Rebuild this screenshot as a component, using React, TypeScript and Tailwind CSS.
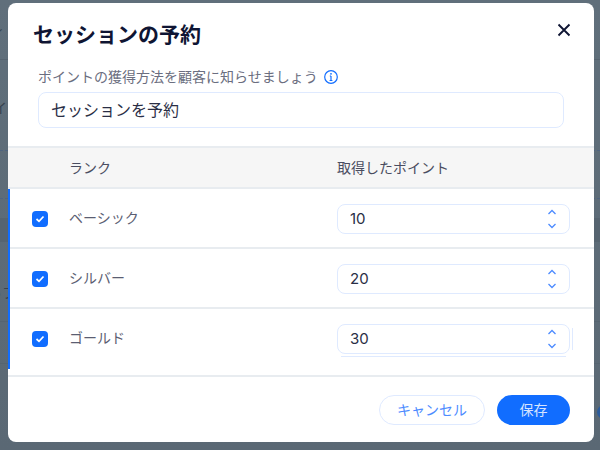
import { FC } from 'react'

const font = { fontFamily: '"Inter", "Noto Sans CJK JP", sans-serif' }

const Stepper: FC<{ value: string }> = ({ value }) => (
  <div className="flex h-[30px] w-[233px] items-center justify-between rounded-lg border border-[#dfeaff] bg-white pl-[12px] pr-[12px] text-[15px] text-[#2a2e45]">
    <span>{value}</span>
    <div className="flex flex-col gap-[6px] text-[#4d8bff]">
      <svg width="10" height="7" viewBox="0 0 10 7" fill="none" stroke="currentColor" strokeWidth="1.3">
        <path d="M1.5 5 5 1.5 8.5 5" />
      </svg>
      <svg width="10" height="7" viewBox="0 0 10 7" fill="none" stroke="currentColor" strokeWidth="1.3">
        <path d="M1.5 2 5 5.5 8.5 2" />
      </svg>
    </div>
  </div>
)

const Row: FC<{ name: string; value: string; last?: boolean }> = ({ name, value, last }) => (
  <div className={`flex h-[60px] items-start pl-[22px] ${last ? '' : 'border-b-2 border-[#e8ecf0]'}`}>
    <div className="mt-[22px] flex h-4 w-4 items-center justify-center rounded-[4px] bg-[#116dff]">
      <svg width="10" height="8" viewBox="0 0 10 8" fill="none" stroke="white" strokeWidth="1.7">
        <path d="M1.5 4 4 6.3 8.5 1.5" />
      </svg>
    </div>
    <div className="ml-[21px] mt-[19px] w-[268px] text-sm leading-5 text-[#5b5e72]">{name}</div>
    <div className="relative mt-[15px]">
      <Stepper value={value} />
      {last && (
        <>
          <span className="absolute -right-[3px] top-[4px] h-[22px] w-px bg-[#dfeaff]" />
          <span className="absolute left-[4px] top-[32px] h-px w-[225px] bg-[#dfeaff]" />
        </>
      )}
    </div>
  </div>
)

// the page behind the dialog, only its edges show
const Backdrop = () => (
  <div className="absolute inset-0 flex flex-col bg-gradient-to-b from-[#606f7b] to-[#5a6874] text-sm text-[#37434f]">
    <div className="h-[60px] border-b border-[#566470]" />
    <div className="h-[91px] border-b border-dashed border-[#4f6480]" />
    <div className="h-[48px] border-b border-dashed border-[#4f6480]" />
    <div className="mt-[19px] h-[24px] bg-[#566470]" />
    <div className="mt-[79px] h-px bg-[#566470]" />
    <div className="mt-[41px] h-px bg-[#566470]" />
    <span className="absolute left-[-7px] top-[98px]">イ</span>
    <span className="absolute left-[-12px] top-[283px]">っフ</span>
    <span className="absolute left-[-9px] top-[22px]">ィ</span>
    <span className="absolute left-[597px] top-[405px] h-[14px] w-[14px] rounded-full bg-[#2c5c9c]" />
  </div>
)

export default function App() {
  return (
    <div className="relative h-[450px] w-[600px] overflow-hidden pl-[8px] pt-[3px]" style={font}>
      <Backdrop />
      <div className="relative flex h-[439px] w-[586px] flex-col overflow-hidden rounded-lg bg-white">
        <div className="flex items-start justify-between pl-[25px] pr-[22px] pt-[17px]">
          <h1 className="text-[21px] font-bold leading-[30px] text-[#0f1533]">セッションの予約</h1>
          <svg className="mt-[2px]" width="16" height="16" viewBox="0 0 16 16" fill="none" stroke="#0f1533" strokeWidth="1.9">
            <path d="M2.5 2.5 13.5 13.5M13.5 2.5 2.5 13.5" />
          </svg>
        </div>
        <div className="mt-[17px] flex items-center gap-[6px] pl-[30px] text-sm leading-5 text-[#6b6e80]">
          ポイントの獲得方法を顧客に知らせましょう
          <svg width="14" height="14" viewBox="0 0 14 14" fill="none" stroke="#116dff" strokeWidth="1.2">
            <circle cx="7" cy="7" r="6.3" />
            <path d="M7 6v4.5M5.6 10.5h2.8M5.8 6H7" />
            <circle cx="7" cy="3.8" r=".9" fill="#116dff" stroke="none" />
          </svg>
        </div>
        <div className="ml-[30px] mt-[5px] flex h-[36px] w-[526px] items-center rounded-lg border border-[#dfeaff] pl-[12px] text-base text-[#2a2e45]">
          セッションを予約
        </div>
        <div className="mt-[18px] flex h-[43px] items-center border-y-2 border-[#e8ecf0] bg-[#f6f6f6] pl-[61px] text-sm text-[#4a4d60]">
          <span className="w-[268px]">ランク</span>
          <span>取得したポイント</span>
        </div>
        <div className="border-l-2 border-[#116dff]">
          <Row name="ベーシック" value="10" />
          <Row name="シルバー" value="20" />
          <Row name="ゴールド" value="30" last />
        </div>
        <div className="h-[8px] border-b-2 border-[#e8ecf0]" />
        <div className="flex justify-end gap-3 pr-[24px] pt-[18px]">
          <button className="h-[30px] w-[106px] rounded-full border border-[#dfeaff] text-sm text-[#4d8bff]">キャンセル</button>
          <button className="h-[30px] w-[73px] rounded-full bg-[#116dff] text-sm text-[#d6e4ff]">保存</button>
        </div>
      </div>
    </div>
  )
}
